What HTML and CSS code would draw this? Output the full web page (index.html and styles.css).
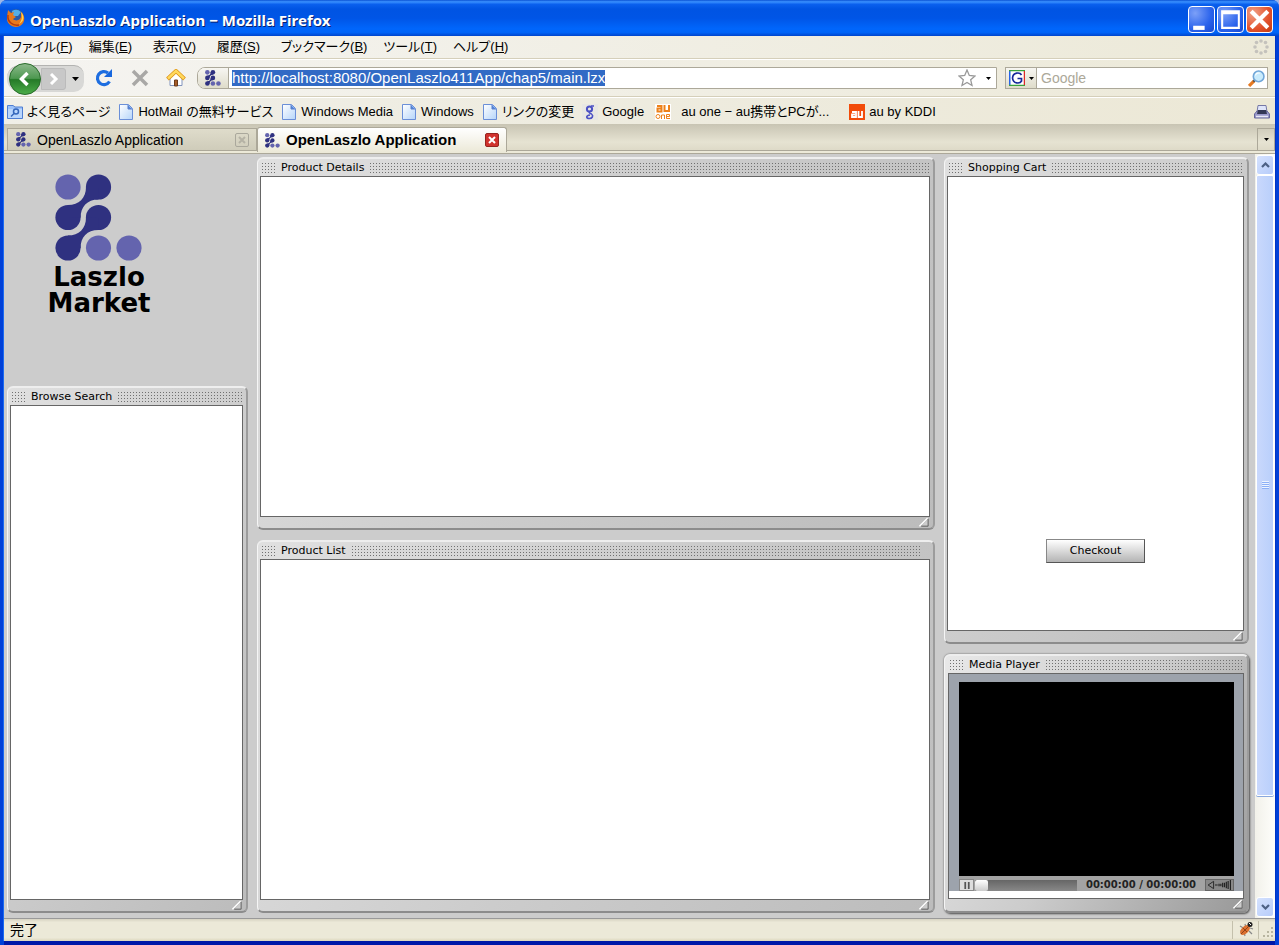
FILE: index.html
```html
<!DOCTYPE html>
<html lang="ja">
<head>
<meta charset="utf-8">
<title>OpenLaszlo Application - Mozilla Firefox</title>
<link rel="stylesheet" href="styles.css">
</head>
<body>
<svg class="defs" aria-hidden="true">
  <defs>
    <symbol id="laszlo" viewBox="0 0 88 88">
      <g fill="#2f3180"><circle cx="43.5" cy="13" r="12.6"/><circle cx="13" cy="43.5" r="12.6"/><circle cx="43.5" cy="43.5" r="12.6"/><circle cx="13" cy="74" r="12.6"/>
      <path d="M31 13C31 24 24 31 13 31L13 43L25.6 43.5C25.6 33 32 25.5 43.5 25.5L43 13ZM31 43.500C31 54.500 24 61.500 13 61.500L13 74L25.600 74C25.600 63 32 56 43.500 56L43 43Z"/></g>
      <g fill="#6464ae"><circle cx="13" cy="13" r="12.6"/><circle cx="43.500" cy="74" r="12.600"/><circle cx="74" cy="74" r="12.600"/></g>
    </symbol>
    <linearGradient id="pg" x1="0" y1="0" x2="1" y2="1"><stop offset="0" stop-color="#fff"/><stop offset="1" stop-color="#b5d5fa"/></linearGradient>
    <symbol id="page" viewBox="0 0 14 16"><path d="M.5.5H9.500L13.500 4.500V15.500H.5Z" fill="url(#pg)" stroke="#6a8fd8"/><path d="M9 1V5H13" fill="#4f86dd" stroke="#5c7fca"/></symbol>
    <linearGradient id="gr" x1="0" y1="0" x2="0" y2="1"><stop offset="0" stop-color="#8db98c"/><stop offset=".48" stop-color="#4d9850"/><stop offset=".52" stop-color="#257a28"/><stop offset="1" stop-color="#4cad49"/></linearGradient>
    <symbol id="grip" viewBox="0 0 12 12"><path d="M1 10L10 1" stroke="#fff" stroke-width="1.500"/><path d="M3 10L11 2V10Z" fill="#ccc"/><path d="M3 10H10.500V2" fill="none" stroke="#555"/></symbol>
  </defs>
</svg>
<div class="window">
  <header class="titlebar">
    <svg class="fox" viewBox="0 0 20 20"><circle cx="10" cy="9" r="8" fill="#285aa8"/><path d="M6 3Q11 0 15 4L12 8L7 8Z" fill="#55aee5"/><path d="M2 2L5 5L8 4L7 7L10 9L7 11C10 14 15 12 15 8L15 4C19 7 20 14 14 18C8 21 0 17 1 9Z" fill="#e8791c"/><path d="M15 4C19 8 18 14 13 16C17 11 16 8 15 4Z" fill="#ffd34d"/><path d="M2 7C1 14 7 18 13 17" fill="none" stroke="#b43c10" stroke-width="1.500"/></svg>
    <h1 class="title">OpenLaszlo Application − Mozilla Firefox</h1>
    <div class="winbtns">
      <button class="winbtn" aria-label="最小化"><svg viewBox="0 0 24 24"><path d="M4 18H15V22H4Z" fill="#fff"/></svg></button>
      <button class="winbtn" aria-label="最大化"><svg viewBox="0 0 24 24"><path d="M3 3H21V21H3ZM5 7V19H19V7Z" fill="#fff" fill-rule="evenodd"/></svg></button>
      <button class="winbtn winbtn-close" aria-label="閉じる"><svg viewBox="0 0 24 24"><path d="M4 4L20 20M20 4L4 20" stroke="#fff" stroke-width="4"/></svg></button>
    </div>
  </header>
  <div class="frame">
    <nav class="menubar">
      <button>ファイル(<u>F</u>)</button><button>編集(<u>E</u>)</button><button>表示(<u>V</u>)</button><button>履歴(<u>S</u>)</button><button>ブックマーク(<u>B</u>)</button><button>ツール(<u>T</u>)</button><button>ヘルプ(<u>H</u>)</button>
      <svg class="throbber" viewBox="0 0 16 16" fill="#c4c2bc"><circle cx="8" cy="2" r="1.800"/><circle cx="12.500" cy="3.500" r="1.800"/><circle cx="14" cy="8" r="1.800"/><circle cx="12.500" cy="12.500" r="1.800"/><circle cx="8" cy="14" r="1.800"/><circle cx="3.500" cy="12.500" r="1.800"/><circle cx="2" cy="8" r="1.800"/><circle cx="3.500" cy="3.500" r="1.800"/></svg>
    </nav>
    <div class="toolbar">
      <div class="history">
        <button class="back" aria-label="戻る"><svg viewBox="0 0 32 32"><circle cx="16" cy="16" r="15.500" fill="url(#gr)" stroke="#2a6c2c"/><path d="M18.500 10L12.500 16L18.500 22" fill="none" stroke="#fff" stroke-width="3.500"/></svg></button>
        <button class="forward" aria-label="進む"><svg viewBox="0 0 12 12"><path d="M3 1L8 6L3 11" fill="none" stroke="#fff" stroke-width="3"/></svg></button>
        <button class="drop" aria-label="履歴一覧"><svg viewBox="0 0 7 4"><path d="M0 0H7L3.500 4Z"/></svg></button>
      </div>
      <button class="tool reload" aria-label="再読み込み"><svg viewBox="0 0 18 18"><path d="M14.500 12.500A6.500 6.500 0 1 1 13 4" fill="none" stroke="#1e6ee0" stroke-width="3.200"/><path d="M17 0V8H9Z" fill="#1767de"/></svg></button>
      <button class="tool stop" aria-label="中止"><svg viewBox="0 0 18 18"><path d="M2 2L16 16M16 2L2 16" stroke="#a9a8a6" stroke-width="3.500"/></svg></button>
      <button class="tool home" aria-label="ホーム"><svg viewBox="0 0 20 18"><path d="M4 9V16.500H16V9L10 4Z" fill="#fff" stroke="#8294bd"/><path d="M1.500 10L10 2L18.500 10" fill="none" stroke="#dd9418" stroke-width="4"/><path d="M2 9.500L10 2L18 9.500" fill="none" stroke="#ffd95c" stroke-width="2.400"/><path d="M8.500 11H11.500V17H8.500Z" fill="#a65d2a" stroke="#6b3b1c"/></svg></button>
      <div class="address">
        <span class="site"><svg><use href="#laszlo"/></svg></span>
        <div class="urlwrap"><input class="url" aria-label="アドレス" value="http://localhost:8080/OpenLaszlo411App/chap5/main.lzx"></div>
        <button class="star" aria-label="ブックマークに追加"><svg viewBox="0 0 18 18"><path d="M9 1L11.300 6.500L17 7L12.700 10.800L14 16.500L9 13.500L4 16.500L5.300 10.800L1 7L6.700 6.500Z" fill="#fff" stroke="#999" stroke-width="1.300"/></svg></button>
        <button class="small-drop" aria-label="アドレス一覧"><svg viewBox="0 0 5 3"><path d="M0 0H5L2.500 3Z"/></svg></button>
      </div>
      <div class="search">
        <button class="engine" aria-label="検索エンジン"><svg class="g" viewBox="0 0 16 16"><path d="M0 0H16V16H0Z" fill="#fff"/><path d="M.5 16V.5" stroke="#2662e8" stroke-width="2"/><path d="M0 .5H16M0 15.500H16" stroke="#38a23c" stroke-width="1.500"/><path d="M15.500 1V15" stroke="#dc2a2a" stroke-width="1.500"/><path d="M12.500 5C11 2 4 2 3.500 8C4 14 11 14 12.500 11V8.500H8.500" fill="none" stroke="#17289b" stroke-width="1.700"/></svg><svg class="arr" viewBox="0 0 5 3"><path d="M0 0H5L2.500 3Z"/></svg></button>
        <input class="query" aria-label="検索" placeholder="Google">
        <button class="go" aria-label="検索"><svg viewBox="0 0 16 16"><path d="M1 15L6 10" stroke="#e67a22" stroke-width="3"/><path d="M5 11L7.500 8.500" stroke="#555" stroke-width="2"/><circle cx="10" cy="6" r="5" fill="#c9ebfc" stroke="#72a7d8" stroke-width="1.500"/><path d="M7 5Q8 2 11 3" fill="none" stroke="#fff"/></svg></button>
      </div>
    </div>
    <nav class="bookmarks">
      <a href="#"><svg class="ic" viewBox="0 0 16 16"><path d="M.5 1.500H6L8 3H15.500V14.500H.5Z" fill="#9cc2fa" stroke="#4f7ed2"/><path d="M1 5H15V14H1Z" fill="#b9d6fd"/><circle cx="9" cy="7.500" r="2.500" fill="none" stroke="#3466bb" stroke-width="1.500"/><path d="M4 12.500L7 9.500" stroke="#3466bb" stroke-width="1.500"/></svg>よく見るページ</a>
      <a href="#"><svg class="ic"><use href="#page"/></svg>HotMail の無料サービス</a>
      <a href="#"><svg class="ic"><use href="#page"/></svg>Windows Media</a>
      <a href="#"><svg class="ic"><use href="#page"/></svg>Windows</a>
      <a href="#"><svg class="ic"><use href="#page"/></svg>リンクの変更</a>
      <a href="#"><svg class="ic" viewBox="0 0 16 16"><path d="M0 0H16V16H0Z" fill="#e8e7e3"/><circle cx="7.500" cy="5" r="2.600" fill="none" stroke="#4c51c4" stroke-width="2"/><path d="M9 2H12M9 7C6 8 7 9 9.500 10C12 12 10 14.500 7.500 14.500C4 14.500 3.500 11.500 8 11" fill="none" stroke="#4c51c4" stroke-width="1.600"/></svg>Google</a>
      <a href="#" class="auone"><svg class="ic" viewBox="0 0 16 16"><path d="M0 0H16V16H0Z" fill="#fff"/><g fill="none" stroke="#ee811b" stroke-width="2"><path d="M2 2H6.500V7.500H2.500V4.500H6"/><path d="M9.500 1V7H14V1"/></g><g fill="none" stroke="#ee811b"><circle cx="3" cy="12.500" r="2"/><path d="M6.500 15V11H9.500V15M15 14.500H11.500V10.500H14.500V12.500H12"/></g></svg>au one − au携帯とPCが...</a>
      <a href="#"><svg class="ic" viewBox="0 0 16 16"><path d="M0 0H16V16H0Z" fill="#f24b09"/><g fill="none" stroke="#fff" stroke-width="1.800"><path d="M3 8H7V13H3V10.500H6"/><path d="M9.500 7V13H13V7"/></g></svg>au by KDDI</a>
      <svg class="printer" viewBox="0 0 16 14"><path d="M4 .5H12L13 7H3Z" fill="#dfe5fa" stroke="#7678a5"/><path d="M3 6H13L15.500 9V13H.5V9Z" fill="#9998c9" stroke="#65669a"/><path d="M4 5H12L13 9H3Z" fill="#333755"/><path d="M2 11.500H14" stroke="#e9e9f7" stroke-width="1.500"/></svg>
    </nav>
    <div class="tabs">
      <div class="tab"><svg class="tabicon"><use href="#laszlo"/></svg><span>OpenLaszlo Application</span><button class="close" aria-label="タブを閉じる"><svg viewBox="0 0 8 8"><path d="M1 1L7 7M7 1L1 7" stroke="currentColor" stroke-width="2"/></svg></button></div>
      <div class="tab active"><svg class="tabicon"><use href="#laszlo"/></svg><span>OpenLaszlo Application</span><button class="close" aria-label="タブを閉じる"><svg viewBox="0 0 8 8"><path d="M1 1L7 7M7 1L1 7" stroke="currentColor" stroke-width="2"/></svg></button></div>
      <button class="alltabs" aria-label="タブ一覧"><svg viewBox="0 0 5 3"><path d="M0 0H5L2.500 3Z"/></svg></button>
    </div>
    <div class="view">
      <main class="app">
        <div class="column">
          <div class="brand"><svg class="logo"><use href="#laszlo"/></svg><div class="brandname"><div>Laszlo</div><div>Market</div></div></div>
          <section class="panel"><h2><span>Browse Search</span></h2><div class="body"></div><footer><svg class="grip"><use href="#grip"/></svg></footer></section>
        </div>
        <div class="column">
          <section class="panel"><h2><span>Product Details</span></h2><div class="body"></div><footer><svg class="grip"><use href="#grip"/></svg></footer></section>
          <section class="panel list"><h2><span>Product List</span></h2><div class="body"></div><footer><svg class="grip"><use href="#grip"/></svg></footer></section>
        </div>
        <div class="column">
          <section class="panel"><h2><span>Shopping Cart</span></h2><div class="body cart"><button class="checkout">Checkout</button></div><footer><svg class="grip"><use href="#grip"/></svg></footer></section>
          <section class="panel media"><h2><span>Media Player</span></h2>
            <div class="body"><div class="player"><div class="screen"></div>
              <div class="controls"><button class="pause" aria-label="一時停止"><svg viewBox="0 0 8 8"><path d="M1 0H3V8H1ZM5 0H7V8H5Z" fill="#555"/></svg></button><input class="seek" type="range" value="0" aria-label="再生位置"><span class="time">00:00:00 / 00:00:00</span><button class="volume" aria-label="音量"><svg viewBox="0 0 28 11"><path d="M1.500 5.500L7.500 1.500V9.500Z" fill="none" stroke="#222"/><path d="M9 5.500H12M13.500 4V7M15.500 4V7M17.500 3V8M19.500 3V8M21.500 2V9M23.500 1V10M26 0V11" stroke="#222" stroke-width="1.300"/></svg></button></div>
            </div></div>
            <footer><svg class="grip"><use href="#grip"/></svg></footer></section>
        </div>
      </main>
      <div class="scroll">
        <button class="sbtn" aria-label="上へ"><svg viewBox="0 0 9 6"><path d="M1 5L4.500 1.500L8 5" fill="none" stroke="#4d6185" stroke-width="2.200"/></svg></button>
        <div class="track"><div class="thumb"><i></i></div></div>
        <button class="sbtn" aria-label="下へ"><svg viewBox="0 0 9 6"><path d="M1 1L4.500 4.500L8 1" fill="none" stroke="#4d6185" stroke-width="2.200"/></svg></button>
      </div>
    </div>
    <footer class="status"><span>完了</span>
      <div class="bugbox"><svg viewBox="0 0 16 16"><path d="M2 5L7 8M7 3L8 7M12 7L15 8M11 10L14 13M2 10L6 10M6 11L7 15" stroke="#888" stroke-width="1.200"/><ellipse cx="7" cy="9" rx="3.500" ry="6" transform="rotate(45 7 9)" fill="#dc7130"/><path d="M5 7L9 11M3 13L10 6" stroke="#91431b"/><circle cx="12" cy="3.500" r="2.500" fill="#222"/><path d="M11 2L13 4" stroke="#fff"/></svg></div>
      <svg class="sizer" viewBox="0 0 12 12" fill="#b8b5a0"><path d="M8 0H10V2H8ZM4 4H6V6H4ZM8 4H10V6H8ZM0 8H2V10H0ZM4 8H6V10H4ZM8 8H10V10H8Z"/></svg>
    </footer>
  </div>
</div>
</body>
</html>
```
FILE: styles.css
```css
* { box-sizing: border-box; }
body { margin: 0; background: #9cb7e8; font: 14px/20px "Liberation Sans", "Noto Sans CJK JP", sans-serif; font-feature-settings: "palt"; color: #000; }
button { border: 0; padding: 0; background: none; font: inherit; color: inherit; font-feature-settings: inherit; }
svg { display: block; flex: none; }
.defs { position: absolute; width: 0; height: 0; }
.window { height: 100vh; min-height: 600px; display: flex; flex-direction: column; background: #0040d8; border-radius: 7px 7px 0 0; overflow: hidden; }
.titlebar { height: 36px; flex: none; display: flex; align-items: center; padding: 3px 6px 0 6px; background: linear-gradient(#0a52d4 0, #3a91ff 5%, #0a60ee 12%, #0054e3 25%, #0055e6 50%, #0066fc 80%, #0064f8 90%, #0045cc 100%); }
.fox { width: 20px; height: 20px; margin-bottom: 4px; }
.title { margin: 0 0 0 4px; flex: 1; font: bold 15px/20px "Noto Sans", sans-serif; color: #fff; text-shadow: 1px 1px 0 #06206e; }
.winbtns { display: flex; gap: 2px; }
.winbtn { width: 27px; height: 27px; border: 1px solid #fff; border-radius: 4px; background: radial-gradient(circle at 25% 25%, #7ca0f8, #2a63ec 60%, #1747d0); }
.winbtn svg { width: 25px; height: 25px; }
.winbtn-close { background: radial-gradient(circle at 25% 25%, #f0a085, #e2512c 60%, #c03a10); }
.frame { flex: 1; min-height: 0; margin: 0 4px 4px; display: flex; flex-direction: column; background: #ece9d8; box-shadow: -1px 0 #1b6af2, 1px 0 #0034c4, 0 4px #0018a8; }
.menubar { height: 23px; flex: none; display: flex; align-items: center; gap: 16px; padding: 0 6px 0 7px; background: linear-gradient(90deg, #f5f4f1, #ece9d8); border-bottom: 1px solid #d5cfba; font-size: 13px; }
.menubar button { min-width: 48px; text-align: left; white-space: nowrap; }
.throbber { width: 16px; height: 16px; margin-left: auto; }
.toolbar { height: 38px; flex: none; display: flex; align-items: center; padding: 0 7px 0 3px; background: linear-gradient(90deg, #f5f4f1, #ece9d8); border-top: 1px solid #fff; border-bottom: 1px solid #d5cfba; }
.history { display: flex; align-items: center; width: 77px; height: 27px; border-radius: 13px 10px 10px 13px; background: #d8d8d6; border-top: 1px solid #b3b3b1; margin-right: 8px; }
.back { width: 34px; height: 34px; flex: none; padding-left: 2px; }
.back svg { width: 32px; height: 34px; }
.forward { width: 25px; height: 22px; border: 1px solid #bbb; background: #c8c8c8; border-radius: 0 3px 3px 0; display: grid; place-items: center; }
.forward svg { width: 12px; height: 12px; }
.drop { flex: 1; display: grid; place-items: center; }
.drop svg { width: 7px; height: 4px; }
.tool { width: 24px; display: grid; place-items: center; margin-right: 12px; }
.tool svg { width: 18px; height: 18px; }
.home svg { width: 20px; height: 18px; }
.address { flex: 1; display: flex; height: 22px; border: 1px solid #aca899; border-radius: 8px 0 0 8px; background: #fff; align-items: stretch; margin: 0 8px 0 -3px; overflow: hidden; }
.site { width: 31px; background: linear-gradient(#f7f6f2, #dfdcca); border-right: 1px solid #aca899; display: grid; place-items: center; }
.site svg { width: 16px; height: 16px; }
.urlwrap { flex: 1; padding: 2px 3px; }
.url { display: block; width: 373px; height: 16px; padding: 0; border: 0; background: #316ac5; color: #fff; font: 15px/16px "Liberation Sans", sans-serif; }
.star svg { width: 18px; height: 18px; }
.star { margin-right: 4px; }
.small-drop { width: 16px; display: grid; place-items: center; }
.small-drop svg, .arr { width: 5px; height: 3px; }
.search { width: 263px; height: 22px; display: flex; border: 1px solid #aca899; background: #fff; }
.engine { width: 31px; display: flex; align-items: center; justify-content: center; gap: 4px; background: linear-gradient(#f7f6f2, #dfdcca); border-right: 1px solid #aca899; }
.g { width: 16px; height: 16px; }
.query { flex: 1; min-width: 0; border: 0; padding: 0 4px; font: inherit; }
.query::placeholder { color: #aca899; opacity: 1; }
.go svg { width: 17px; height: 17px; margin-right: 2px; }
.bookmarks { height: 27px; flex: none; display: flex; align-items: center; gap: 8px; padding: 2px 5px 0 3px; border-top: 1px solid #fff; background: linear-gradient(90deg, #f0efe8, #ece8d6); white-space: nowrap; font-size: 13px; }
.bookmarks a { display: flex; align-items: center; gap: 4px; color: #000; text-decoration: none; }
.bookmarks .auone { gap: 10px; margin: 0 12px 0 3px; }
.ic { width: 16px; height: 16px; }
.printer { width: 16px; height: 14px; margin-left: auto; }
.tabs { height: 30px; flex: none; display: flex; padding: 4px 0 0 3px; background: linear-gradient(#c8c4b3, #e6e3d2 60%, #dedac8 26px, #aca899 26px, #aca899 27px, #ece9d8 27px, #ece9d8 29px, #aca899 29px); }
.tab { width: 250px; height: 23px; display: flex; align-items: center; padding: 0 7px 0 8px; border: 1px solid #aca899; background: linear-gradient(#dfdccb, #cfccba); }
.tab.active { height: 25px; margin-top: -1px; border-radius: 3px 3px 0 0; border-bottom: 0; background: linear-gradient(#fff, #ece9d8); font-weight: bold; font-size: 15px; padding: 0 7px; }
.tabicon { width: 15px; height: 15px; margin-right: 6px; }
.close { width: 14px; height: 14px; margin-left: auto; border: 1px solid #aaa89c; border-radius: 2px; display: grid; place-items: center; color: #b5b2a5; }
.close svg { width: 8px; height: 8px; }
.active .close { background: #d0322d; border-color: #962420; color: #fff; }
.alltabs { width: 18px; height: 23px; margin-left: auto; border: 1px solid #aca899; display: grid; place-items: center; }
.alltabs svg { width: 5px; height: 3px; }
.view { flex: 1; min-height: 0; display: flex; background: #ccc; }
.app { flex: 1; display: grid; grid-template-columns: 241px minmax(0, 1fr) 305px; gap: 9px; padding: 3px 6px 5px 3px; }
.column { display: flex; flex-direction: column; gap: 10px; min-height: 0; }
.brand { height: 219px; flex: none; padding: 17px 0 0 48px; }
.logo { width: 88px; height: 88px; }
.brandname { width: 120px; margin: 2px 0 0 -16px; font: bold 26px/26px "DejaVu Sans", sans-serif; text-align: center; }
.panel { flex: 1; min-height: 0; display: flex; flex-direction: column; padding: 0 3px 0 2px; border: 1px solid #aaa; border-top: 2px solid #eee; border-left: 1px solid #f5f5f5; border-right: 2px solid #9c9c9c; border-bottom: 2px solid #8c8c8c; border-radius: 6px; background: linear-gradient(120deg, #e0e0e0, #ccc 50%, #bcbcbc); }
.panel h2 { height: 17px; flex: none; margin: 0; padding: 1px 0 0 2px; display: flex; align-items: center; gap: 6px; font: 11px/16px "DejaVu Sans", sans-serif; }
.panel h2::before, .panel h2::after { content: ""; height: 10px; margin-bottom: 1px; background: conic-gradient(from 270deg at 1px 1px, #707070 90deg, transparent 0) 0 0 / 3px 3px; }
.panel h2::before { width: 13px; }
.panel h2::after { flex: 1; }
.list h2::after { margin-right: 8px; }
.body { flex: 1; min-height: 0; border: 1px solid #666; background: #fff; }
.panel footer { height: 11px; flex: none; display: flex; justify-content: flex-end; }
.grip { width: 12px; height: 11px; }
.cart { display: flex; align-items: flex-end; justify-content: center; padding-bottom: 67px; }
.checkout { width: 99px; height: 24px; border: 1px solid #888; border-right-color: #555; border-bottom-color: #555; background: linear-gradient(#fff, #f0f0f0 20%, #b4b4b4); font: 11px/20px "DejaVu Sans", sans-serif; }
.panel.media { flex: none; padding-left: 3px; background: linear-gradient(120deg, #e8e8e8, #ccc 50%, #999); box-shadow: 0 0 2px #666, 1px 1px 2px #555; }
.media .body { padding-bottom: 7px; }
.panel.media footer { height: 12px; }
.player { background: #9da3ac; padding: 8px 9px 0 10px; }
.screen { height: 194px; background: #000; }
.controls { height: 15px; display: flex; align-items: center; padding-top: 3px; background: #a3a3a3; }
.pause { width: 15px; height: 12px; border: 1px solid #888; background: #ddd; display: grid; place-items: center; }
.pause svg { width: 8px; height: 7px; }
.seek { appearance: none; width: 102px; height: 11px; margin: 0 0 0 1px; background: linear-gradient(#666, #888); }
.seek::-webkit-slider-thumb { appearance: none; width: 13px; height: 11px; border-radius: 2px; background: linear-gradient(#fff, #ccc); }
.time { flex: 1; text-align: center; white-space: nowrap; font: bold 10px/12px "DejaVu Sans", sans-serif; color: #222; }
.volume { width: 29px; height: 12px; border: 1px solid #666; background: #888; }
.volume svg { width: 27px; height: 10px; }
.scroll { width: 20px; flex: none; display: flex; flex-direction: column; padding: 1px; background: linear-gradient(90deg, #f2f1ea, #fefefb); }
.sbtn { height: 20px; border: 1px solid #fff; border-radius: 3px; background: linear-gradient(135deg, #d5e2fe, #b7ccfa); display: grid; place-items: center; }
.sbtn svg { width: 9px; height: 6px; }
.track { flex: 1; }
.thumb { height: 86%; border: 1px solid #fff; border-radius: 2px; background: linear-gradient(90deg, #c9d8fc, #b9cffb); box-shadow: 0 1px #8aa8dd; display: grid; place-items: center; }
.thumb i { width: 7px; height: 8px; background: repeating-linear-gradient(#eef4fe 0, #eef4fe 1px, #8cb0f8 1px, #8cb0f8 2px); }
.status { height: 23px; flex: none; display: flex; align-items: center; padding-left: 6px; border-top: 1px solid #999; background: linear-gradient(#d7d3c2, #ece9d8 15%, #ece9d8 85%, #dcd7bc); }
.bugbox { width: 27px; height: 18px; margin-left: auto; padding-left: 5px; border-left: 1px solid #c4c0ac; border-right: 1px solid #c4c0ac; }
.bugbox svg { width: 16px; height: 16px; }
.sizer { width: 12px; height: 12px; margin: 6px 0 0 4px; }
```
